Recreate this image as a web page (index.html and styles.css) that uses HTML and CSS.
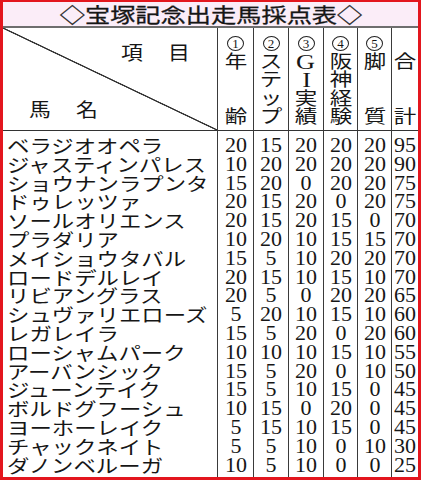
FILE: index.html
```html
<!DOCTYPE html>
<html lang="ja">
<head>
<meta charset="utf-8">
<title>宝塚記念出走馬採点表</title>
<link rel="stylesheet" href="styles.css">
</head>
<body>
<div class="frame">
  <div class="title"><span class="title-text">◇宝塚記念出走馬採点表◇</span></div>
  <div class="table">
    <div class="hcell hname">
      <div class="hrow hrow-top"><span class="hw">項</span><span class="hw">目</span></div>
      <div class="hrow hrow-bottom"><span class="hw">馬</span><span class="hw">名</span></div>
    </div>
    <div class="hcell hcol"><span class="hslot"><span class="circ">1</span></span><span class="hc">年</span><span class="hc"></span><span class="hc"></span><span class="hc">齢</span></div>
    <div class="hcell hcol"><span class="hslot"><span class="circ">2</span></span><span class="hc">ス</span><span class="hc">テ</span><span class="hc">ッ</span><span class="hc">プ</span></div>
    <div class="hcell hcol"><span class="hslot"><span class="circ">3</span></span><span class="hc lat">G</span><span class="hc lat">I</span><span class="hc">実</span><span class="hc">績</span></div>
    <div class="hcell hcol"><span class="hslot"><span class="circ">4</span></span><span class="hc">阪</span><span class="hc">神</span><span class="hc">経</span><span class="hc">験</span></div>
    <div class="hcell hcol"><span class="hslot"><span class="circ">5</span></span><span class="hc">脚</span><span class="hc"></span><span class="hc"></span><span class="hc">質</span></div>
    <div class="hcell hcol"><span class="hc"></span><span class="hc">合</span><span class="hc"></span><span class="hc"></span><span class="hc">計</span></div>

    <div class="bcol names">
      <div class="name"><span>ベラジオオペラ</span></div>
      <div class="name"><span>ジャスティンパレス</span></div>
      <div class="name"><span>ショウナンラプンタ</span></div>
      <div class="name"><span>ドゥレッツァ</span></div>
      <div class="name"><span>ソールオリエンス</span></div>
      <div class="name"><span>プラダリア</span></div>
      <div class="name"><span>メイショウタバル</span></div>
      <div class="name"><span>ロードデルレイ</span></div>
      <div class="name"><span>リビアングラス</span></div>
      <div class="name"><span>シュヴァリエローズ</span></div>
      <div class="name"><span>レガレイラ</span></div>
      <div class="name"><span>ローシャムパーク</span></div>
      <div class="name"><span>アーバンシック</span></div>
      <div class="name"><span>ジューンテイク</span></div>
      <div class="name"><span>ボルドグフーシュ</span></div>
      <div class="name"><span>ヨーホーレイク</span></div>
      <div class="name"><span>チャックネイト</span></div>
      <div class="name"><span>ダノンベルーガ</span></div>
    </div>
    <div class="bcol nums">
      <div class="num"><span>20</span></div><div class="num"><span>10</span></div><div class="num"><span>15</span></div><div class="num"><span>20</span></div><div class="num"><span>20</span></div><div class="num"><span>10</span></div><div class="num"><span>15</span></div><div class="num"><span>20</span></div><div class="num"><span>20</span></div><div class="num"><span>5</span></div><div class="num"><span>15</span></div><div class="num"><span>10</span></div><div class="num"><span>15</span></div><div class="num"><span>15</span></div><div class="num"><span>10</span></div><div class="num"><span>5</span></div><div class="num"><span>5</span></div><div class="num"><span>10</span></div>
    </div>
    <div class="bcol nums">
      <div class="num"><span>15</span></div><div class="num"><span>20</span></div><div class="num"><span>20</span></div><div class="num"><span>15</span></div><div class="num"><span>15</span></div><div class="num"><span>20</span></div><div class="num"><span>5</span></div><div class="num"><span>15</span></div><div class="num"><span>5</span></div><div class="num"><span>20</span></div><div class="num"><span>5</span></div><div class="num"><span>10</span></div><div class="num"><span>5</span></div><div class="num"><span>5</span></div><div class="num"><span>15</span></div><div class="num"><span>15</span></div><div class="num"><span>5</span></div><div class="num"><span>5</span></div>
    </div>
    <div class="bcol nums">
      <div class="num"><span>20</span></div><div class="num"><span>20</span></div><div class="num"><span>0</span></div><div class="num"><span>20</span></div><div class="num"><span>20</span></div><div class="num"><span>10</span></div><div class="num"><span>10</span></div><div class="num"><span>10</span></div><div class="num"><span>0</span></div><div class="num"><span>10</span></div><div class="num"><span>20</span></div><div class="num"><span>10</span></div><div class="num"><span>20</span></div><div class="num"><span>10</span></div><div class="num"><span>0</span></div><div class="num"><span>10</span></div><div class="num"><span>10</span></div><div class="num"><span>10</span></div>
    </div>
    <div class="bcol nums">
      <div class="num"><span>20</span></div><div class="num"><span>20</span></div><div class="num"><span>20</span></div><div class="num"><span>0</span></div><div class="num"><span>15</span></div><div class="num"><span>15</span></div><div class="num"><span>20</span></div><div class="num"><span>15</span></div><div class="num"><span>20</span></div><div class="num"><span>15</span></div><div class="num"><span>0</span></div><div class="num"><span>15</span></div><div class="num"><span>0</span></div><div class="num"><span>15</span></div><div class="num"><span>20</span></div><div class="num"><span>15</span></div><div class="num"><span>0</span></div><div class="num"><span>0</span></div>
    </div>
    <div class="bcol nums">
      <div class="num"><span>20</span></div><div class="num"><span>20</span></div><div class="num"><span>20</span></div><div class="num"><span>20</span></div><div class="num"><span>0</span></div><div class="num"><span>15</span></div><div class="num"><span>20</span></div><div class="num"><span>10</span></div><div class="num"><span>20</span></div><div class="num"><span>10</span></div><div class="num"><span>20</span></div><div class="num"><span>10</span></div><div class="num"><span>10</span></div><div class="num"><span>0</span></div><div class="num"><span>0</span></div><div class="num"><span>0</span></div><div class="num"><span>10</span></div><div class="num"><span>0</span></div>
    </div>
    <div class="bcol nums">
      <div class="num"><span>95</span></div><div class="num"><span>90</span></div><div class="num"><span>75</span></div><div class="num"><span>75</span></div><div class="num"><span>70</span></div><div class="num"><span>70</span></div><div class="num"><span>70</span></div><div class="num"><span>70</span></div><div class="num"><span>65</span></div><div class="num"><span>60</span></div><div class="num"><span>60</span></div><div class="num"><span>55</span></div><div class="num"><span>50</span></div><div class="num"><span>45</span></div><div class="num"><span>45</span></div><div class="num"><span>45</span></div><div class="num"><span>30</span></div><div class="num"><span>25</span></div>
    </div>
  </div>
</div>
</body>
</html>
```

FILE: styles.css
```css
* {
  box-sizing: border-box;
}

html, body {
  margin: 0;
  padding: 0;
  background: #ffffff;
}

body {
  width: 426px;
  height: 480px;
  overflow: hidden;
  color: #161616;
  font-family: "Noto Sans CJK JP", sans-serif;
}

.frame {
  width: 421px;
  height: 480px;
  border: 3px solid #e3161e;
  border-top-width: 2px;
  display: flex;
  flex-direction: column;
}

.title {
  height: 26px;
  background: #fbedf8;
  border-bottom: 2px solid #6e6e6e;
  display: flex;
  justify-content: center;
  align-items: center;
}

.title-text {
  display: inline-block;
  font-size: 20.5px;
  line-height: 24px;
  font-weight: 400;
  -webkit-text-stroke: 0.3px #161616;
  transform: scaleX(1.23);
  transform-origin: center;
  white-space: nowrap;
}

.table {
  flex: 1;
  display: grid;
  grid-template-columns: 214px 36px 35px 35px 34px 34px 27px;
  grid-template-rows: 103px 1fr;
}

.hcell {
  border-bottom: 1px solid #333;
}

.hcell + .hcell,
.bcol + .bcol {
  border-left: 1px solid #3a3a3a;
}

.hname {
  display: flex;
  flex-direction: column;
  justify-content: space-between;
  padding: 14px 0 11px;
  background: linear-gradient(to top right,
    transparent calc(50% - 1px),
    #333 calc(50% - 0.4px),
    #333 calc(50% + 0.4px),
    transparent calc(50% + 1px));
}

.hrow {
  display: flex;
  gap: 25px;
  height: 20px;
}

.hrow-top {
  justify-content: flex-end;
  padding-right: 27px;
}

.hrow-bottom {
  justify-content: flex-start;
  padding-left: 26px;
}

.hw {
  display: inline-block;
  width: 22px;
  text-align: center;
  font-size: 19px;
  line-height: 20px;
  transform: scaleX(1.15);
  transform-origin: center;
}

.hcol {
  display: grid;
  grid-template-rows: repeat(5, 18.5px);
  justify-items: center;
  padding-top: 6px;
  font-family: "Liberation Serif", "Noto Sans CJK JP", serif;
}

.hc {
  display: inline-block;
  font-size: 18px;
  line-height: 18.5px;
  transform: scaleX(1.25);
  transform-origin: center;
}

.hslot {
  display: flex;
  align-items: center;
  justify-content: center;
}

.circ {
  display: flex;
  align-items: center;
  justify-content: center;
  width: 17px;
  height: 15px;
  border: 1px solid #222;
  border-radius: 50%;
  font-family: "Liberation Serif", serif;
  font-size: 13px;
  line-height: 1;
}

.hc.lat {
  font-size: 21px;
}

.bcol {
  display: flex;
  flex-direction: column;
  padding-top: 5px;
}

.name {
  height: 18.8px;
  line-height: 18.8px;
  padding-left: 4px;
  white-space: nowrap;
}

.name span {
  display: inline-block;
  font-size: 18.5px;
  transform: scaleX(1.21);
  transform-origin: left center;
}

.num {
  height: 18.8px;
  line-height: 18.8px;
  text-align: center;
  font-family: "Liberation Serif", serif;
}

.num span {
  display: inline-block;
  font-size: 20px;
  transform: scaleX(1.1);
  transform-origin: center;
}
```
